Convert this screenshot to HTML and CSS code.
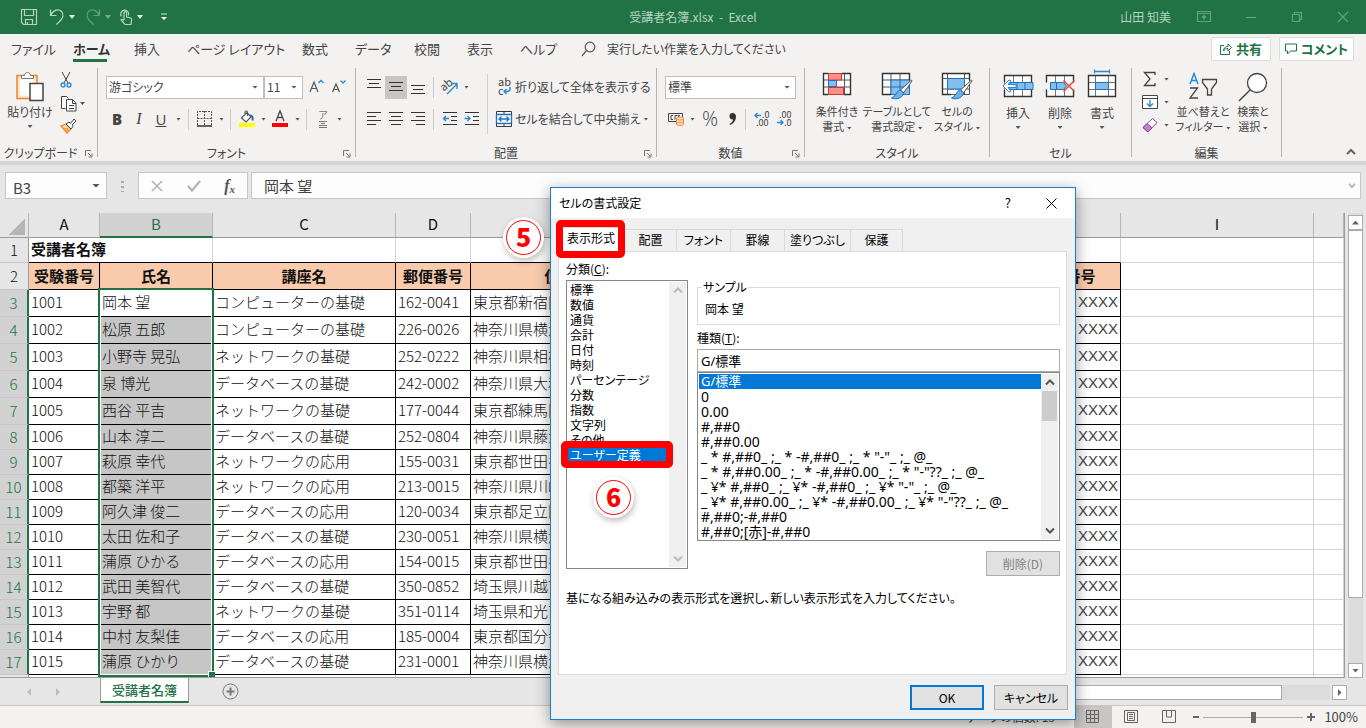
FILE: index.html
```html
<!DOCTYPE html>
<html lang="ja">
<head>
<meta charset="utf-8">
<title>受講者名簿.xlsx - Excel</title>
<link rel="stylesheet" href="styles.css">
</head>
<body>
<header class="titlebar">
  <div class="quick">
    <button class="tb" aria-label="上書き保存"><svg width="18" height="18" viewBox="0 0 18 18"><path d="M1.500 1.500h15v15h-13l-2-2zM4.500 1.500v6h9v-6M5.500 16.500v-5h7v5M7.500 14v2.500"/></svg></button>
    <button class="tb" aria-label="元に戻す"><svg width="16" height="18" viewBox="0 0 16 18"><path d="M1.500 1.500v6h6M1.500 7.500c3-6 8-7 11-4s1 7-1 9l-4 4"/></svg></button><i class="caret light"></i>
    <button class="tb dim" aria-label="やり直し"><svg width="16" height="18" viewBox="0 0 16 18"><path d="M14.500 1.500v6h-6M14.500 7.500c-3-6-8-7-11-4s-1 7 1 9l4 4"/></svg></button><i class="caret light dim"></i>
    <button class="tb touch" aria-label="タッチ/マウス モードの切り替え"><svg width="14" height="18" viewBox="0 0 14 18"><path d="M2.500 8.500a4 4 0 1 1 7-1M5 12V5a1.300 1.300 0 0 1 2.600 0v4l4 1c1 .3 1.200 1 1 2l-.6 4.500H6L2 12c.5-1 1.500-1 3 .5"/></svg></button><i class="caret light"></i>
    <button class="tb more" aria-label="クイック アクセス ツール バーのカスタマイズ"><svg width="8" height="8" viewBox="0 0 8 8"><path d="M1 1h6"/><path class="fill" d="M1 4h6l-3 3z"/></svg></button>
  </div>
  <div class="doc-title">受講者名簿.xlsx&nbsp; -&nbsp; Excel</div>
  <div class="title-end">
    <div class="user">山田 知美</div>
    <div class="winbtns">
      <button class="tb dim" aria-label="リボンの表示オプション"><svg width="14" height="12" viewBox="0 0 14 12"><path d="M.5.5h13v10H.5zM.5 2.500h13M7 9V4.500M5 6.500l2-2 2 2"/></svg></button>
      <button class="tb dim" aria-label="最小化"><svg width="12" height="12" viewBox="0 0 12 12"><path d="M1 6.500h10"/></svg></button>
      <button class="tb dim" aria-label="元に戻す (縮小)"><svg width="12" height="12" viewBox="0 0 12 12"><path d="M1.500 3.500h7v7h-7zM3.500 3.500v-2h7v7h-2"/></svg></button>
      <button class="tb dim" aria-label="閉じる"><svg width="12" height="12" viewBox="0 0 12 12"><path d="M1 1l10 10M11 1L1 11"/></svg></button>
    </div>
  </div>
</header>

<nav class="tabs">
  <button>ファイル</button><button class="active">ホーム</button><button>挿入</button><button class="wide">ページ レイアウト</button><button class="short">数式</button><button class="mid">データ</button><button>校閲</button><button>表示</button><button>ヘルプ</button>
  <button class="tellme"><svg width="15" height="16" viewBox="0 0 15 16"><circle cx="9" cy="6" r="4.800"/><path d="M5.500 9.500L1 15"/></svg><span>実行したい作業を入力してください</span></button>
  <div class="sharing">
    <button class="share"><svg width="12" height="12" viewBox="0 0 12 12"><path d="M4 2.500H.5v9h9V8M3.500 8c0-3 2-4.500 4.500-4.500V1l3.500 3.500L8 8V5.500c-2 0-3.500.5-4.500 2.500z"/></svg>共有</button>
    <button class="share"><svg width="12" height="12" viewBox="0 0 12 12"><path d="M.5 1h11v7H5.500L2.500 11V8h-2z"/></svg>コメント</button>
  </div>
</nav>

<section class="ribbon">
  <div class="group clipboard">
    <div class="body">
      <button class="big paste"><svg width="30" height="31" viewBox="0 0 30 31"><path fill="#fbe7c4" stroke="#ed8733" stroke-width="1.500" d="M2 4.500h20v23H2z"/><path fill="#fff" d="M5 7.500h14v17H5z"/><path fill="#fff" stroke="#777" d="M6.500 7.500v-3h3c0-4 6-4 6 0h3v3z"/><path fill="#fff" stroke="#444" stroke-width="1.500" d="M15 12.500h13v17H15z"/></svg><span>貼り付け</span><i class="caret"></i></button>
      <div class="clip-tools">
        <button aria-label="切り取り"><svg width="12" height="18" viewBox="0 0 12 18"><path stroke="#444" d="M2 1l6 11M10 1L4 12"/><circle cx="3" cy="14" r="2" stroke="#2b88d8" stroke-width="1.300"/><circle cx="9" cy="14" r="2" stroke="#2b88d8" stroke-width="1.300"/></svg></button>
        <div class="line"><button aria-label="コピー"><svg width="17" height="17" viewBox="0 0 17 17"><path stroke="#444" fill="#fff" d="M5.500 13.500h-4v-12h5l2 2"/><path stroke="#444" fill="#fff" d="M6.500 4.500h6l3.500 3.500v8H6.500zM12.500 4.500v4H16M9 10.500h5M9 13.500h5"/></svg></button><i class="caret"></i></div>
        <button aria-label="書式のコピー/貼り付け"><svg width="17" height="16" viewBox="0 0 17 16"><path fill="#fbd9a8" stroke="#ed8733" stroke-width="1.300" d="M1 8l5-2 5 5-4 4z"/><path fill="#f5a34a" d="M3 10l5 0 1 2-2 2.500z"/><path fill="#fff" stroke="#444" d="M6 6l3-2 1.500 1.500L14 1l2 2-4 4 1 1.500-2 2.500z"/></svg></button>
      </div>
    </div>
    <div class="label"><span>クリップボード</span><i class="launcher"><svg width="8" height="8" viewBox="0 0 8 8"><path d="M.5 6V.5H6M3 3l3.500 3.500M7 3.500V7H3.500"/></svg></i></div>
  </div>
  <span class="sep"></span>

  <div class="group font">
    <div class="body rows">
      <div class="line">
        <span class="combo face"><select aria-label="フォント"><option>游ゴシック</option></select></span><span class="combo size"><select aria-label="フォント サイズ"><option>11</option></select></span>
        <button class="w22 grow" aria-label="フォント サイズの拡大"><svg width="16" height="16" viewBox="0 0 16 16"><path stroke="#555" stroke-width="1.200" d="M2 13l4-10 4 10M3.500 9.500h5"/><path stroke="#2b88d8" stroke-width="1.300" d="M10.500 4l2.500-2.500L15.500 4"/></svg></button>
        <button class="w22" aria-label="フォント サイズの縮小"><svg width="16" height="16" viewBox="0 0 16 16"><path stroke="#555" stroke-width="1.200" d="M2.500 13L6 5l3.500 8M3.500 10.500h5"/><path stroke="#2b88d8" stroke-width="1.300" d="M10.500 1.500L13 4l2.500-2.500"/></svg></button>
      </div>
      <div class="line">
        <button class="w22 lat"><b>B</b></button><button class="w22 lat serif"><em>I</em></button><button class="w22 lat"><u>U</u></button><i class="caret in12"></i><span class="vs"></span>
        <button class="w22" aria-label="罫線"><svg width="16" height="16" viewBox="0 0 16 16"><path stroke="#555" stroke-dasharray="2 1" d="M.5 14V.5h14V14M.5 7.500h14M7.500 0v14"/><path stroke="#333" stroke-width="1.500" d="M0 15h15"/></svg></button><i class="caret in10"></i><span class="vs"></span>
        <button class="w22" aria-label="塗りつぶしの色"><svg width="18" height="18" viewBox="0 0 18 18"><path stroke="#555" fill="#fff" stroke-width="1.200" d="M3.500 8L9 2.500l4 4.500-5 5zM7 5V2.500c0-2 2.500-2 2.500 0V6"/><path stroke="#2b6cb0" stroke-width="2" d="M12 5.500c2.500 0 3 2 2.500 5"/><path fill="#ff0" d="M1 13h16v4H1z"/></svg></button><i class="caret in10"></i>
        <button class="w24" aria-label="フォントの色"><svg width="18" height="18" viewBox="0 0 18 18"><path stroke="#444" stroke-width="1.300" d="M5 11l4-10 4 10M6.500 7.500h5"/><path fill="#f00" d="M1 13h16v4H1z"/></svg></button><i class="caret in10"></i><span class="vs"></span>
        <button class="w22 ruby" aria-label="ふりがなの表示/非表示"><small>ア</small><svg width="10" height="8" viewBox="0 0 10 8"><path stroke="#777" d="M1 1.500h8M3 3.500h4M1 5.500h8M1 7.500h8"/></svg></button><i class="caret in10"></i>
      </div>
    </div>
    <div class="label"><span>フォント</span><i class="launcher"><svg width="8" height="8" viewBox="0 0 8 8"><path d="M.5 6V.5H6M3 3l3.500 3.500M7 3.500V7H3.500"/></svg></i></div>
  </div>
  <span class="sep"></span>

  <div class="group align">
    <div class="body">
      <div class="rows align-left">
        <div class="line">
          <button class="w22" aria-label="上揃え"><svg width="16" height="16" viewBox="0 0 16 16"><path stroke="#333" d="M1 .5h14M3 4.500h10M1 8.500h14"/></svg></button><button class="w22 on" aria-label="上下中央揃え"><svg width="16" height="16" viewBox="0 0 16 16"><path stroke="#333" d="M1 3.500h14M3 7.500h10M1 11.500h14"/></svg></button><button class="w22" aria-label="下揃え"><svg width="16" height="16" viewBox="0 0 16 16"><path stroke="#333" d="M1 6.500h14M3 10.500h10M1 14.500h14"/></svg></button><span class="vs"></span>
          <button class="w22" aria-label="方向"><svg width="18" height="18" viewBox="0 0 18 18"><text x="0" y="12" transform="rotate(-40 4 9)" font-size="11" fill="#444">ab</text><path stroke="#2b88d8" stroke-width="1.400" d="M6 16L16 6M10.500 5.500H16V11"/></svg></button><i class="caret in10"></i>
        </div>
        <div class="line">
          <button class="w22" aria-label="左揃え"><svg width="16" height="16" viewBox="0 0 16 16"><path stroke="#333" d="M1 1.500h14M1 5.500h9M1 9.500h14M1 13.500h9"/></svg></button><button class="w22" aria-label="中央揃え"><svg width="16" height="16" viewBox="0 0 16 16"><path stroke="#333" d="M1 1.500h14M3 5.500h10M1 9.500h14M3 13.500h10"/></svg></button><button class="w22" aria-label="右揃え"><svg width="16" height="16" viewBox="0 0 16 16"><path stroke="#333" d="M1 1.500h14M6 5.500h9M1 9.500h14M6 13.500h9"/></svg></button><span class="vs"></span>
          <button class="w22" aria-label="インデントを減らす"><svg width="16" height="16" viewBox="0 0 16 16"><path stroke="#333" d="M1 1.500h14M9 5.500h6M9 9.500h6M1 13.500h14"/><path stroke="#2b88d8" stroke-width="1.400" d="M7 7.500H1.500M4 5L1.500 7.500 4 10"/></svg></button><button class="w22" aria-label="インデントを増やす"><svg width="16" height="16" viewBox="0 0 16 16"><path stroke="#333" d="M1 1.500h14M9 5.500h6M9 9.500h6M1 13.500h14"/><path stroke="#2b88d8" stroke-width="1.400" d="M.5 7.500H6M3.500 5L6 7.500 3.500 10"/></svg></button>
        </div>
      </div>
      <span class="vs tall"></span>
      <div class="rows align-right">
        <div class="line"><button class="txt"><svg width="16" height="18" viewBox="0 0 16 18"><text x="2" y="8" font-size="11" fill="#444">ab</text><text x="2" y="17" font-size="11" fill="#444">c</text><path stroke="#2b88d8" stroke-width="1.400" d="M14 9v2.500c0 2-2 2-6 2M10.500 11L8 13.500l2.500 2.500"/></svg><span>折り返して全体を表示する</span></button></div>
        <div class="line"><button class="txt"><svg width="16" height="16" viewBox="0 0 16 16"><path stroke="#333" fill="#fff" d="M.5.5h15v15H.5zM8 0v3M8 13v3"/><path stroke="#1f6fbf" fill="#fff" stroke-width="1.300" d="M.5 3.500h15v9H.5zM3 8h10M5.500 5.500L3 8l2.500 2.500M10.500 5.500L13 8l-2.500 2.500"/></svg><span>セルを結合して中央揃え</span></button><i class="caret in10"></i></div>
      </div>
    </div>
    <div class="label"><span>配置</span><i class="launcher"><svg width="8" height="8" viewBox="0 0 8 8"><path d="M.5 6V.5H6M3 3l3.500 3.500M7 3.500V7H3.500"/></svg></i></div>
  </div>
  <span class="sep"></span>

  <div class="group number">
    <div class="body rows">
      <div class="line"><span class="combo fmt"><select aria-label="数値の書式"><option>標準</option></select></span></div>
      <div class="line">
        <button class="w22" aria-label="通貨表示形式"><svg width="18" height="16" viewBox="0 0 18 16"><path stroke="#444" d="M9 10.500H1.500v-8h14V6M6 4.500H4v4h2M8 8.500v-4h2.500M13 4.500h-1.500V6"/><path fill="#fce3c8" stroke="#ed8733" d="M9.500 7.500v5.500c0 2 7 2 7 0V7.500c0-2-7-2-7 0c0 2 7 2 7 0M9.500 10.300c0 2 7 2 7 0"/></svg></button><i class="caret in10"></i><button class="pct">%</button><button class="comma" aria-label="桁区切りスタイル"><svg width="9" height="14" viewBox="0 0 9 14"><path fill="#333" d="M4.500 1a3.300 3.300 0 0 1 3.500 3.500C8 9 5 12 2 13l-.5-1C4 10.500 5 9 5 7.500A3.200 3.200 0 1 1 4.500 1z"/></svg></button><span class="vs"></span>
        <button class="w22" aria-label="小数点以下の表示桁数を増やす"><svg width="16" height="16" viewBox="0 0 16 16"><path stroke="#2b88d8" stroke-width="1.400" d="M7 4.500H1M3.500 2L1 4.500 3.500 7"/><text x="8" y="7" font-size="9" fill="#444">.0</text><text x="2" y="15" font-size="9" fill="#444">.00</text></svg></button><button class="w22" aria-label="小数点以下の表示桁数を減らす"><svg width="16" height="16" viewBox="0 0 16 16"><path stroke="#2b88d8" stroke-width="1.400" d="M1 11.500h6M4.500 9L7 11.500 4.500 14"/><text x="3" y="7" font-size="9" fill="#444">.00</text><text x="8" y="15" font-size="9" fill="#444">.0</text></svg></button>
      </div>
    </div>
    <div class="label"><span>数値</span><i class="launcher"><svg width="8" height="8" viewBox="0 0 8 8"><path d="M.5 6V.5H6M3 3l3.500 3.500M7 3.500V7H3.500"/></svg></i></div>
  </div>
  <span class="sep"></span>

  <div class="group style">
    <div class="body">
      <button class="big"><svg width="30" height="28" viewBox="0 0 30 28"><path fill="#fff" stroke="#555" d="M1.500 1.500h27v21h-27zM1.500 8h27M1.500 15h27M6.500 1v22M22.500 1v22"/><path fill="#ff8f8f" stroke="#d9362b" d="M6.500 1.500h13V8h-13zM6.500 15.500h15v7h-15z"/><path fill="#83beec" stroke="#1f6fbf" d="M6.500 8.500h8v6h-8z"/><path stroke="#333" stroke-width="1.400" d="M6 1.500H1.500v21H6M20 1.500h8.500v21H22"/></svg><span>条件付き<br>書式 <i class="caret"></i></span></button>
      <button class="big"><svg width="32" height="28" viewBox="0 0 32 28"><path fill="#fff" stroke="#555" d="M1.500 1.500h27v21h-27zM1.500 8h27M1.500 15h27M10 1v22M19 1v22"/><path fill="#83beec" stroke="#1f6fbf" d="M10 8h18.500v14.500H10zM10 15h18M19 8v14"/><path stroke="#333" stroke-width="1.400" d="M10 22.500H1.500v-21h27V8"/><path fill="#fff" stroke="#555" d="M30.500 8l-11 10 3 3 8.500-12z"/><path fill="#6db2ea" stroke="#1f6fbf" d="M19.500 18c-4 0-3 5-9 8 5 2 11 0 12-5z"/></svg><span>テーブルとして<br>書式設定 <i class="caret"></i></span></button>
      <button class="big"><svg width="32" height="28" viewBox="0 0 32 28"><path fill="#fff" stroke="#555" d="M1.500 1.500h27v21h-27zM1.500 6.500h27M1.500 17h27M6.500 1v22M23.500 1v22"/><path fill="#83beec" stroke="#1f6fbf" d="M6.500 6.500h17V17h-17z"/><path stroke="#333" stroke-width="1.400" d="M10 22.500H1.500v-21h27V8"/><path fill="#fff" stroke="#555" d="M30.500 8l-11 10 3 3 8.500-12z"/><path fill="#6db2ea" stroke="#1f6fbf" d="M19.500 18c-4 0-3 5-9 8 5 2 11 0 12-5z"/></svg><span>セルの<br>スタイル <i class="caret"></i></span></button>
    </div>
    <div class="label"><span>スタイル</span></div>
  </div>
  <span class="sep"></span>

  <div class="group cells">
    <div class="body">
      <button class="big"><svg width="32" height="28" viewBox="0 0 32 28"><path fill="#fff" stroke="#777" d="M2.500 4.500h27v21h-27zM11.500 4v22M20.500 4v22"/><path stroke="#333" stroke-width="1.400" d="M2.500 11V4.500h27V11M2.500 19v6.500h27V19"/><path fill="#83beec" stroke="#1f6fbf" d="M8 11.500h23v7H8zM15 11.500v7M23 11.500v7"/><path fill="#fff" stroke="#2b88d8" d="M14 13.500H6l3-4-2-.5-6 6 6 6 2-.5-3-4h8z"/></svg><span>挿入</span><i class="caret"></i></button>
      <button class="big"><svg width="32" height="28" viewBox="0 0 32 28"><path fill="#fff" stroke="#777" d="M2.500 4.500h27v21h-27zM11.500 4v22M20.500 4v22"/><path stroke="#333" stroke-width="1.400" d="M2.500 11V4.500h27V11M2.500 19v6.500h27V19"/><path fill="#f3f2f1" d="M1 12h6v6H1zM21 12h10v6H21z"/><path fill="#83beec" stroke="#1f6fbf" d="M6.500 11.500h13l3 3.500-3 3.500h-13zM12.500 11.500v7"/><path stroke="#e8493f" stroke-width="1.500" d="M19.500 9.500l11 11M30.500 9.500l-11 11"/></svg><span>削除</span><i class="caret"></i></button>
      <button class="big"><svg width="32" height="28" viewBox="0 0 32 28"><path stroke="#2b88d8" stroke-width="1.300" d="M8.500.5h15M8.500-1.500v4M23.500-1.500v4"/><path fill="#fff" stroke="#777" d="M2.500 4.500h27v21h-27zM9.500 4v22M22.500 4v22M2 11.500h27M2 18.500h27"/><path stroke="#333" stroke-width="1.400" d="M2.500 4.500h27v21h-27z"/><path fill="#83beec" stroke="#1f6fbf" d="M9.500 11.500h13v7h-13z"/></svg><span>書式</span><i class="caret"></i></button>
    </div>
    <div class="label"><span>セル</span></div>
  </div>
  <span class="sep"></span>

  <div class="group edit">
    <div class="body">
      <div class="edit-tools">
        <div class="line"><button aria-label="合計"><svg width="16" height="16" viewBox="0 0 16 16"><path stroke="#444" stroke-width="1.300" d="M13 4V1.500H2.500L8 8l-5.500 6.500H13V12"/></svg></button><i class="caret"></i></div>
        <div class="line"><button aria-label="フィル"><svg width="16" height="16" viewBox="0 0 16 16"><path fill="#fff" stroke="#444" d="M.5 1.500h15v13H.5zM.5 4.500h15"/><path stroke="#2b88d8" stroke-width="1.400" d="M8 6v6.500M5 9.500l3 3 3-3"/></svg></button><i class="caret"></i></div>
        <div class="line"><button aria-label="クリア"><svg width="16" height="16" viewBox="0 0 16 16"><path fill="#fff" stroke="#8a3f9c" d="M10.500 1.500l4.500 4-9 9.500-5-4.500z"/><path fill="#c77fd4" stroke="#8a3f9c" d="M5 6.500l5 4.500-4 4-5-4.500z"/></svg></button><i class="caret"></i></div>
      </div>
      <button class="big"><svg width="30" height="28" viewBox="0 0 30 28"><path stroke="#2b88d8" stroke-width="1.500" d="M2 12l4-10.500L10 12M3.500 8.500h5"/><path stroke="#444" stroke-width="1.300" d="M2 16h7.500L2 26h8M14.500 7.500h14v3L23.500 17v6h-4v-6l-5-6.500z"/></svg><span>並べ替えと<br>フィルター <i class="caret"></i></span></button>
      <button class="big"><svg width="30" height="30" viewBox="0 0 30 30"><circle cx="19" cy="11" r="9.500" fill="#fff" stroke="#444" stroke-width="1.300"/><path stroke="#444" stroke-width="1.500" d="M12 18L1 29"/></svg><span>検索と<br>選択 <i class="caret"></i></span></button>
    </div>
    <div class="label"><span>編集</span></div>
  </div>
  <span class="sep"></span>
  <button class="collapse" aria-label="リボンを折りたたむ"><svg width="10" height="6" viewBox="0 0 10 6"><path stroke="#666" stroke-width="2" d="M1 5l4-4 4 4"/></svg></button>
</section>

<section class="formula">
  <div class="namebox"><input aria-label="名前ボックス" value="B3"><i class="caret big-c"></i></div>
  <span class="dots"></span>
  <div class="fx">
    <button aria-label="キャンセル"><svg width="12" height="12" viewBox="0 0 12 12"><path stroke="#b5b5b5" stroke-width="1.600" d="M1 1l10 10M11 1L1 11"/></svg></button>
    <button aria-label="入力"><svg width="14" height="12" viewBox="0 0 14 12"><path stroke="#b5b5b5" stroke-width="2.200" d="M1 6l4 4.500L13 1"/></svg></button>
    <button class="fxb"><em>f<sub>x</sub></em></button>
  </div>
  <div class="fbar"><input aria-label="数式バー" value="岡本 望"><svg width="8" height="6" viewBox="0 0 8 6"><path stroke="#bbb" stroke-width="2" d="M1 1l3 3 3-3"/></svg></div>
</section>

<main class="sheet">
  <div class="grid">
  <table>
    <colgroup><col class="c0"><col class="cA"><col class="cB"><col class="cC"><col class="cD"><col class="cE"><col class="cF"><col class="cH"><col class="cI"><col></colgroup>
    <thead><tr><th class="corner"></th><th>A</th><th class="cur">B</th><th>C</th><th>D</th><th></th><th></th><th></th><th>I</th><th></th></tr></thead>
    <tbody>
    <tr><th>1</th><td colspan="2" class="ttl">受講者名簿</td><td></td><td></td><td></td><td></td><td></td><td></td><td></td></tr>
    <tr class="hd t"><th>2</th><td>受験番号</td><td>氏名</td><td>講座名</td><td>郵便番号</td><td>住所</td><td></td><td>電話番号</td><td></td><td></td></tr>
    <tr class="d t"><th>3</th><td>1001</td><td class="act">岡本 望<span class="range"></span></td><td>コンピューターの基礎</td><td>162-0041</td><td>東京都新宿区</td><td></td><td>XXXX</td><td></td><td></td></tr>
    <tr class="d t"><th>4</th><td>1002</td><td>松原 五郎</td><td>コンピューターの基礎</td><td>226-0026</td><td>神奈川県横浜市</td><td></td><td>XXXX</td><td></td><td></td></tr>
    <tr class="d t"><th>5</th><td>1003</td><td>小野寺 晃弘</td><td>ネットワークの基礎</td><td>252-0222</td><td>神奈川県相模原市</td><td></td><td>XXXX</td><td></td><td></td></tr>
    <tr class="d t"><th>6</th><td>1004</td><td>泉 博光</td><td>データベースの基礎</td><td>242-0002</td><td>神奈川県大和市</td><td></td><td>XXXX</td><td></td><td></td></tr>
    <tr class="d t"><th>7</th><td>1005</td><td>西谷 平吉</td><td>ネットワークの基礎</td><td>177-0044</td><td>東京都練馬区</td><td></td><td>XXXX</td><td></td><td></td></tr>
    <tr class="d"><th>8</th><td>1006</td><td>山本 淳二</td><td>データベースの基礎</td><td>252-0804</td><td>神奈川県藤沢市</td><td></td><td>XXXX</td><td></td><td></td></tr>
    <tr class="d"><th>9</th><td>1007</td><td>萩原 幸代</td><td>ネットワークの応用</td><td>155-0031</td><td>東京都世田谷区</td><td></td><td>XXXX</td><td></td><td></td></tr>
    <tr class="d"><th>10</th><td>1008</td><td>都築 洋平</td><td>ネットワークの応用</td><td>213-0015</td><td>神奈川県川崎市</td><td></td><td>XXXX</td><td></td><td></td></tr>
    <tr class="d"><th>11</th><td>1009</td><td>阿久津 俊二</td><td>データベースの応用</td><td>120-0034</td><td>東京都足立区</td><td></td><td>XXXX</td><td></td><td></td></tr>
    <tr class="d"><th>12</th><td>1010</td><td>太田 佐和子</td><td>データベースの基礎</td><td>230-0051</td><td>神奈川県横浜市</td><td></td><td>XXXX</td><td></td><td></td></tr>
    <tr class="d"><th>13</th><td>1011</td><td>蒲原 ひかる</td><td>データベースの応用</td><td>154-0015</td><td>東京都世田谷区</td><td></td><td>XXXX</td><td></td><td></td></tr>
    <tr class="d"><th>14</th><td>1012</td><td>武田 美智代</td><td>データベースの基礎</td><td>350-0852</td><td>埼玉県川越市</td><td></td><td>XXXX</td><td></td><td></td></tr>
    <tr class="d"><th>15</th><td>1013</td><td>宇野 都</td><td>ネットワークの基礎</td><td>351-0114</td><td>埼玉県和光市</td><td></td><td>XXXX</td><td></td><td></td></tr>
    <tr class="d"><th>16</th><td>1014</td><td>中村 友梨佳</td><td>データベースの応用</td><td>185-0004</td><td>東京都国分寺市</td><td></td><td>XXXX</td><td></td><td></td></tr>
    <tr class="d"><th>17</th><td>1015</td><td>蒲原 ひかり</td><td>データベースの基礎</td><td>231-0001</td><td>神奈川県横浜市</td><td></td><td>XXXX</td><td></td><td></td></tr>
    <tr><th></th><td></td><td></td><td></td><td></td><td></td><td></td><td></td><td></td><td></td></tr>
    </tbody>
  </table>
  </div>
  <div class="vscroll"><button aria-label="上へ"><i class="tri up"></i></button><span class="thumb"></span><button aria-label="下へ"><i class="tri down"></i></button></div>
</main>

<section class="sheetbar">
  <div class="navs"><i class="tri prev pale"></i><i class="tri next pale"></i></div>
  <button class="sheet-tab">受講者名簿</button>
  <button class="add" aria-label="新しいシート"><svg width="17" height="17" viewBox="0 0 17 17"><circle cx="8.500" cy="8.500" r="7.500" stroke="#777"/><path stroke="#777" stroke-width="2" d="M4.500 8.500h8M8.500 4.500v8"/></svg></button>
  <div class="hscroll"><span class="thumb"></span></div>
  <button class="hbtn" aria-label="右へ"><i class="tri next"></i></button>
</section>

<footer class="status">
  <span class="count">データの個数: 15</span>
  <button class="view on" aria-label="標準"><svg width="14" height="14" viewBox="0 0 14 14"><path stroke="#666" d="M.5.5h12v12H.5zM4.500.5v12M8.500.5v12M.5 4.500h12M.5 8.500h12"/></svg></button>
  <button class="view" aria-label="ページ レイアウト"><svg width="14" height="14" viewBox="0 0 14 14"><path stroke="#666" d="M.5.5h13v12H.5zM3.500 2.500h7v8h-7zM5 4.500h4M5 6.500h4M5 8.500h4"/></svg></button>
  <button class="view" aria-label="改ページ プレビュー"><svg width="14" height="14" viewBox="0 0 14 14"><path stroke="#666" d="M.5.5h13v12H.5zM4.500.5v6.500h5V.5"/></svg></button>
  <button class="zm" aria-label="縮小"><svg width="8" height="8" viewBox="0 0 8 8"><path stroke="#666" stroke-width="2" d="M1 4h6"/></svg></button><input type="range" aria-label="ズーム" value="50"><button class="zm" aria-label="拡大"><svg width="8" height="8" viewBox="0 0 8 8"><path stroke="#666" stroke-width="2" d="M0 4h8M4 0v8"/></svg></button><span class="pctv">100%</span>
</footer>

<div class="dialog" role="dialog" aria-labelledby="dlg-title">
  <div class="dlg-head"><h1 id="dlg-title">セルの書式設定</h1><button class="help">?</button><button class="close" aria-label="閉じる"><svg width="11" height="11" viewBox="0 0 11 11"><path stroke="#000" d="M.5.5l10 10M10.500.5l-10 10"/></svg></button></div>
  <div class="dlg-tabs"><button class="active">表示形式</button><button class="t52">配置</button><button class="t54">フォント</button><button class="t54">罫線</button><button class="t66">塗りつぶし</button><button class="t52">保護</button></div>
  <div class="panel">
    <div>
      <div class="lbl" id="cat">分類(<u>C</u>):</div>
      <div class="listbox cat">
        <ul role="listbox" aria-labelledby="cat"><li>標準</li><li>数値</li><li>通貨</li><li>会計</li><li>日付</li><li>時刻</li><li>パーセンテージ</li><li>分数</li><li>指数</li><li>文字列</li><li>その他</li><li class="sel">ユーザー定義</li></ul>
        <div class="lscroll off"><svg width="10" height="7" viewBox="0 0 10 7"><path d="M1 5.500l4-4 4 4"/></svg><svg width="10" height="7" viewBox="0 0 10 7"><path d="M1 1.500l4 4 4-4"/></svg></div>
      </div>
    </div>
    <div class="detail">
      <fieldset><legend>サンプル</legend>岡本 望</fieldset>
      <label class="lbl" for="fmt">種類(<u>T</u>):</label>
      <input id="fmt" class="fmt-in" value="G/標準">
      <div class="listbox fmts">
        <ul role="listbox" aria-label="種類"><li class="sel">G/標準</li><li>0</li><li>0.00</li><li>#,##0</li><li>#,##0.00</li><li>_ * #,##0_ ;_ * -#,##0_ ;_ * "-"_ ;_ @_</li><li>_ * #,##0.00_ ;_ * -#,##0.00_ ;_ * "-"??_ ;_ @_</li><li>_ ¥* #,##0_ ;_ ¥* -#,##0_ ;_ ¥* "-"_ ;_ @_</li><li>_ ¥* #,##0.00_ ;_ ¥* -#,##0.00_ ;_ ¥* "-"??_ ;_ @_</li><li>#,##0;-#,##0</li><li>#,##0;[赤]-#,##0</li></ul>
        <div class="lscroll"><svg width="10" height="7" viewBox="0 0 10 7"><path d="M1 5.500l4-4 4 4"/></svg><span class="thumb"></span><svg width="10" height="7" viewBox="0 0 10 7"><path d="M1 1.500l4 4 4-4"/></svg></div>
      </div>
      <button class="btn del" disabled>削除(D)</button>
    </div>
    <p class="note">基になる組み込みの表示形式を選択し、新しい表示形式を入力してください。</p>
  </div>
  <div class="dlg-foot"><button class="btn ok">OK</button><button class="btn">キャンセル</button></div>
  <span class="mark m1"></span><span class="mark m2"></span>
  <span class="num n5"><b>5</b></span><span class="num n6"><b>6</b></span>
</div>
</body>
</html>
```

FILE: styles.css
```css
* { box-sizing: border-box; }
body {
  margin: 0; height: 100vh; min-width: 1300px; position: relative; overflow: hidden;
  display: flex; flex-direction: column;
  font: 12px/16px "Noto Sans CJK JP", sans-serif;
  font-feature-settings: "palt";
  color: #444; background: #e6e6e6;
}
button, input, select { font: inherit; font-feature-settings: inherit; color: inherit; }
button { border: 0; background: none; padding: 0; display: flex; align-items: center; justify-content: center; white-space: nowrap; }
svg { fill: none; display: block; flex: none; overflow: visible; }
.line { display: flex; align-items: center; }
.caret { flex: none; width: 5px; height: 3px; background: #555; clip-path: polygon(0 0, 100% 0, 50% 100%); display: inline-block; vertical-align: middle; }
.caret.light { background: #e4f0e8; width: 6px; height: 4px; }
.in10 { margin: 0 2px 0 3px; }
.in12 { margin: 0 3px 0 4px; }
.dim { opacity: .45; }

.titlebar { flex: none; height: 34px; background: #217346; display: flex; align-items: center; color: #b5d5c2; }
.titlebar svg { stroke: #b5d5c2; stroke-width: 1.2; }
.titlebar .fill { fill: #fff; stroke: none; }
.quick, .title-end { flex: 1 1 0; display: flex; align-items: center; }
.quick { padding-left: 20px; }
.quick .tb + .tb { margin-left: 11px; }
.quick .caret { margin-left: 4px; }
.quick .caret + .tb { margin-left: 10px; }
.quick .caret + .touch { margin-left: 8px; }
.quick .caret + .more { margin-left: 17px; }
.title-end { justify-content: flex-end; }
.user { padding-right: 26px; }
.winbtns { display: flex; gap: 34px; padding-right: 17px; }

.tabs { flex: none; height: 30px; background: #f3f2f1; display: flex; padding-left: 11px; font-size: 13px; color: #444; }
.tabs > button { width: 53px; justify-content: flex-start; }
.tabs > button:nth-child(1) { width: 62px; }
.tabs > button.wide { width: 115px; }
.tabs > button.active { width: 61px; font-weight: 700; color: #333; position: relative; }
.tabs > button.active::after { content: ""; position: absolute; left: 0; bottom: 2px; width: 34px; height: 3px; background: #217346; }
.tabs > button.mid { width: 59px; }
.tabs > button.tellme { width: auto; gap: 11px; margin-left: 8px; font-size: 12px; }
.tellme svg { stroke: #555; stroke-width: 1.2; }
.sharing { margin-left: auto; display: flex; gap: 8px; align-items: center; padding-right: 12px; }
.share { height: 24px; min-width: 60px; padding: 0 5px; gap: 4px; background: #fff; border: 1px solid #dedcda; border-radius: 2px; color: #217346; font-weight: 700; }
.share svg { stroke: #217346; }

.ribbon { flex: none; height: 97px; background: #f3f2f1; display: flex; padding-top: 4px; }
.sep { flex: none; width: 1px; height: 89px; background: #b5b3b1; }
.group { flex: none; height: 93px; display: flex; flex-direction: column; }
.body { height: 77px; padding-top: 3px; display: flex; }
.body.rows { flex-direction: column; }
.rows .line { height: 32px; }
.label { display: flex; align-items: center; justify-content: center; height: 16px; position: relative; }
.launcher { position: absolute; right: 4px; top: 5px; }
.launcher svg { stroke: #777; }
.w22 { width: 22px; height: 23px; }
.w24 { width: 24px; }
.vs { flex: none; width: 1px; height: 21px; margin: 0 5px 0 4px; background: #cfcdcb; }
.vs.tall { height: 60px; margin: 3px 6px 0 0; }
.on { background: #c8c6c4; }
.lat { font: 700 15px/20px "Open Sans", "Noto Sans", sans-serif; }
.lat u { font-weight: 400; }
.serif { font: italic 16px/20px "Liberation Serif", serif; }
.ruby { flex-direction: column; line-height: 10px; color: #777; }
.ruby small { font-size: 10px; }
.big { flex-direction: column; justify-content: flex-start; line-height: 15px; }
.combo { position: relative; display: flex; height: 23px; }
.combo select { appearance: none; width: 100%; border: 1px solid #c0bebc; background: #fff; border-radius: 0; padding: 0 2px; margin: 0; }
.combo::after { content: ""; position: absolute; right: 6px; top: 10px; width: 6px; height: 3px; background: #555; clip-path: polygon(0 0, 100% 0, 50% 100%); }
.face { width: 158px; }
.size { width: 39px; }
.grow { margin-left: 2px; }
.clipboard { width: 97px; }
.clipboard .label { padding-right: 16px; }
.clipboard .big { width: 60px; }
.paste span { margin-top: 2px; }
.paste .caret { margin-top: 6px; }
.clip-tools { display: flex; flex-direction: column; align-items: flex-start; gap: 6px; }
.clip-tools .caret { margin-left: 3px; }
.font { width: 257px; }
.font .body { padding-left: 8px; }
.align { width: 300px; }
.align .body { padding-left: 7px; }
.align-left { width: 124px; }
.align-right { padding-left: 2px; }
.txt { gap: 3px; }
.number { width: 147px; }
.number .body { padding-left: 8px; }
.fmt { width: 131px; }
.pct { width: 26px; font: 300 20px/22px "Open Sans", "Noto Sans", sans-serif; }
.comma { width: 18px; }
.style { width: 184px; }
.style .body { padding-left: 2px; }
.style .big { width: 60px; padding-top: 1px; font-size: 11px; }
.cells { width: 141px; }
.cells .body { padding-left: 7px; }
.cells .big { width: 42px; gap: 6px; }
.edit { width: 149px; }
.edit .body { padding-left: 10px; }
.edit-tools { width: 34px; display: flex; flex-direction: column; gap: 7px; }
.edit-tools .line { gap: 6px; }
.edit .big { width: 54px; padding-top: 1px; font-size: 11px; }
.edit .big:last-child { width: 46px; }
.edit .big span, .style .big span { margin-top: auto; margin-bottom: 11px; }
.collapse { margin: auto 10px 6px auto; }

.formula { flex: none; height: 52px; border-top: 4px solid #d5d5d5; padding: 7px 5px 14px; display: flex; color: #444; }
.namebox, .fx, .fbar { background: #fdfdfd; border: 1px solid #c6c6c6; display: flex; align-items: center; }
.namebox { width: 102px; padding: 0 6px 0 7px; }
.namebox input, .fbar input { border: 0; background: none; padding: 0; min-width: 0; flex: 1; font-size: 15px; outline: 0; }
.namebox input { padding-top: 4px; }
.big-c { width: 8px; height: 4px; }
.dots { width: 3px; height: 11px; margin: 9px 14px 0; background: repeating-linear-gradient(#aaa 0 2px, transparent 2px 5px); }
.fx { width: 110px; justify-content: space-between; padding: 0 12px; }
.fxb { font: 700 16px/20px "Liberation Serif", serif; color: #555; }
.fxb sub { font-size: 11px; vertical-align: -2px; line-height: 8px; }
.fbar { flex: 1; margin-left: 3px; padding: 0 4px 0 12px; }

.sheet { flex: 1; min-height: 0; display: flex; overflow: hidden; }
.grid { flex: 1; min-width: 0; overflow: hidden; border-right: 1px solid #9b9b9b; border-bottom: 1px solid #9b9b9b; background: #fff; }
table { table-layout: fixed; width: 100%; border-collapse: separate; border-spacing: 0; font-size: 15px; line-height: 20px; font-feature-settings: normal; color: #111; }
.c0 { width: 29px; } .cA { width: 71px; } .cB { width: 113px; } .cC { width: 183px; } .cD { width: 75px; } .cE { width: 178px; } .cF { width: 362px; } .cH { width: 110px; } .cI { width: 193px; }
th { font-weight: 400; padding: 0 0 2px; background: #e6e6e6; border-right: 1px solid #b5b5b5; height: 25px; }
thead th { border-bottom: 1px solid #9b9b9b; }
thead .cur { background: #d2d2d2; color: #217346; border-bottom: 2px solid #217346; }
.corner { background: linear-gradient(135deg, #e6e6e6 50%, #b5b5b5 50%) no-repeat 9px 5px / 16px 17px #e6e6e6; }
tbody th { border-bottom: 1px solid #c6c6c6; border-right-color: #9b9b9b; padding: 0; font-weight: 300; }
td { padding: 0 2px 2px; border-right: 1px solid #d4d4d4; border-bottom: 1px solid #d4d4d4; white-space: nowrap; overflow: hidden; font-weight: 300; height: 25px; }
.t th, .t td { height: 27px; }
.ttl { font-weight: 700; border-bottom-color: #000; }
tbody tr:first-child td:nth-child(n+3):nth-child(-n+7) { border-bottom-color: #000; }
.hd td:nth-child(-n+8) { background: #f8cbad; font-weight: 700; text-align: center; border-color: #000; padding-bottom: 0; }
.d td:nth-child(-n+8) { border-color: #000; }
.d td:nth-child(8) { text-align: right; font-family: "Liberation Sans", sans-serif; color: #444; }
.d th { background: #d2d2d2; color: #217346; border-right: 2px solid #217346; }
.d td:nth-child(3) { background: #c6c6c6; }
.d td.act { position: relative; background: #fff; overflow: visible; }
/* selection frame B3:B17 */
.range { position: absolute; left: -2px; right: -2px; top: -2px; height: 389px; border: 2px solid #217346; box-shadow: inset 0 0 0 1px #fff; }
.range::after { content: ""; position: absolute; right: -3px; bottom: -3px; width: 6px; height: 6px; background: #217346; border: solid #fff; border-width: 1px 0 0 1px; }

.vscroll { flex: none; width: 21px; padding: 2px 3px 0; display: flex; flex-direction: column; background: linear-gradient(#dcdcdc, #dcdcdc) center / 15px 100% no-repeat #e6e6e6; }
.vscroll button, .hbtn { height: 15px; width: 15px; background: #fff; border: 1px solid #ababab; }
.vscroll .thumb { height: 368px; background: #fff; border: 1px solid #ababab; margin-bottom: auto; }
.tri { width: 7px; height: 4px; background: #666; }
.up { clip-path: polygon(50% 0, 100% 100%, 0 100%); }
.down { clip-path: polygon(0 0, 100% 0, 50% 100%); }
.prev, .next { height: 8px; width: 4px; }
.prev { clip-path: polygon(100% 0, 100% 100%, 0 50%); }
.next { clip-path: polygon(0 0, 100% 50%, 0 100%); }
.pale { background: #bdbdbd; }

.sheetbar { flex: none; height: 28px; display: flex; align-items: flex-start; border-bottom: 1px solid #c8c6c4; }
.navs { width: 100px; display: flex; gap: 25px; padding: 10px 0 0 27px; }
.sheet-tab { height: 25px; width: 89px; background: #fff; border: solid #9b9b9b; border-width: 0 1px; border-bottom: 2px solid #217346; color: #217346; font-size: 13px; font-weight: 500; }
.add { margin: 5px 0 0 33px; }
.hscroll { margin: 7px 0 0 auto; width: 490px; height: 15px; background: #dcdcdc; display: flex; }
.hscroll .thumb { width: 442px; background: #fff; border: 1px solid #ababab; }
.hbtn { margin: 7px 19px 0 2px; }

.status { flex: none; height: 22px; background: #f3f2f1; display: flex; align-items: center; justify-content: flex-end; padding-right: 8px; }
.count { margin-right: 19px; }
.view { width: 38px; height: 22px; }
.zm { width: 15px; height: 22px; }
input[type=range] { appearance: none; width: 100px; margin: 0; height: 12px; background: linear-gradient(#aaa, #aaa) center / 100% 1px no-repeat; }
input[type=range]::-webkit-slider-thumb { appearance: none; width: 5px; height: 11px; background: #666; }
.pctv { width: 40px; text-align: right; font-size: 13px; }

.dialog { position: absolute; left: 550px; top: 187px; width: 526px; height: 533px; background: #f0f0f0; border: 1px solid #1a7fd4; box-shadow: 0 4px 14px rgba(0,0,0,.4); color: #000; display: flex; flex-direction: column; }
.dlg-head { height: 30px; background: #fff; display: flex; align-items: center; padding-left: 8px; }
.dlg-head h1 { font-size: 12px; font-weight: 400; margin: 0 auto 0 0; }
.help { font-size: 13px; margin-right: 35px; }
.close { margin-right: 18px; }
.dlg-tabs { display: flex; margin: 11px 7px 0; height: 22px; align-items: flex-end; }
.dlg-tabs button { height: 22px; border: 1px solid #d9d9d9; border-left: 0; border-bottom: 0; padding-bottom: 2px; }
.dlg-tabs .active { background: #fff; width: 67px; height: 24px; padding-bottom: 4px; }
.t52 { width: 52px; } .t54 { width: 54px; } .t66 { width: 66px; }
.panel { flex: 1; margin: 0 8px 0 7px; background: #fff; border: 1px solid #dcdcdc; display: grid; grid-template-columns: 122px 1fr; grid-template-rows: auto 1fr; column-gap: 9px; padding: 10px 6px 0 7px; }
.lbl { display: block; height: 18px; line-height: 14px; }
.listbox { border: 1px solid #828790; display: flex; justify-content: space-between; padding: 1px; background: #fff; }
.listbox ul { list-style: none; margin: 0; padding: 0; flex: 1; }
.listbox li { height: 15px; line-height: 15px; padding-left: 2px; white-space: pre; }
.listbox .sel { background: #0078d7; color: #fff; }
.cat { height: 289px; }
.lscroll { width: 17px; background: #f0f0f0; display: flex; flex-direction: column; align-items: center; justify-content: space-between; padding: 5px 0; }
.lscroll svg { stroke: #555; stroke-width: 2; }
.lscroll.off svg { stroke: #bbb; }
fieldset { margin: 17px 0 0; border: 1px solid #dcdcdc; height: 46px; padding: 6px 7px 0; }
legend { padding: 0 1px; margin-left: -3px; line-height: 16px; }
.detail { display: flex; flex-direction: column; }
.detail .lbl { margin-top: 6px; }
.detail fieldset { flex: none; }
.fmt-in { height: 23px; border: 1px solid #ababab; padding: 0 3px; width: 100%; outline: 0; }
.fmt-in, .fmts { font-family: "Noto Sans", "Noto Sans CJK JP", sans-serif; font-size: 13px; }
.fmts { height: 169px; }
.fmts li + li { font-size: 14px; }
.fmts .lscroll { justify-content: flex-start; gap: 5px; }
.fmts .thumb { width: 15px; height: 30px; background: #cdcdcd; margin-bottom: auto; }
.btn { height: 25px; width: 74px; border: 1px solid #adadad; background: #e1e1e1; color: #000; }
.del { margin: 10px 0 0 auto; color: #838383; }
.ok { border: 2px solid #0078d7; }
.note { grid-column: 1 / 3; margin: 14px 0 0; white-space: nowrap; }
.dlg-foot { display: flex; justify-content: flex-end; gap: 10px; padding: 10px 7px 9px; }
/* numbered callouts */
.mark { position: absolute; border: 7px solid #f00; border-radius: 5px; }
.m1 { left: 5px; top: 32px; width: 69px; height: 38px; }
.m2 { left: 10px; top: 253px; width: 112px; height: 27px; }
.num { position: absolute; width: 41px; height: 41px; border-radius: 50%; background: #fff; padding: 3px; box-shadow: 1px 3px 6px rgba(0,0,0,.25); }
.num b { display: flex; align-items: center; justify-content: center; width: 35px; height: 35px; padding-bottom: 4px; border: 1px solid #f00; border-radius: 50%; color: #f00; font: 900 25px/30px "Noto Sans CJK JP", sans-serif; }
.n5 { left: -48px; top: 29px; }
.n6 { left: 42px; top: 289px; }
```
